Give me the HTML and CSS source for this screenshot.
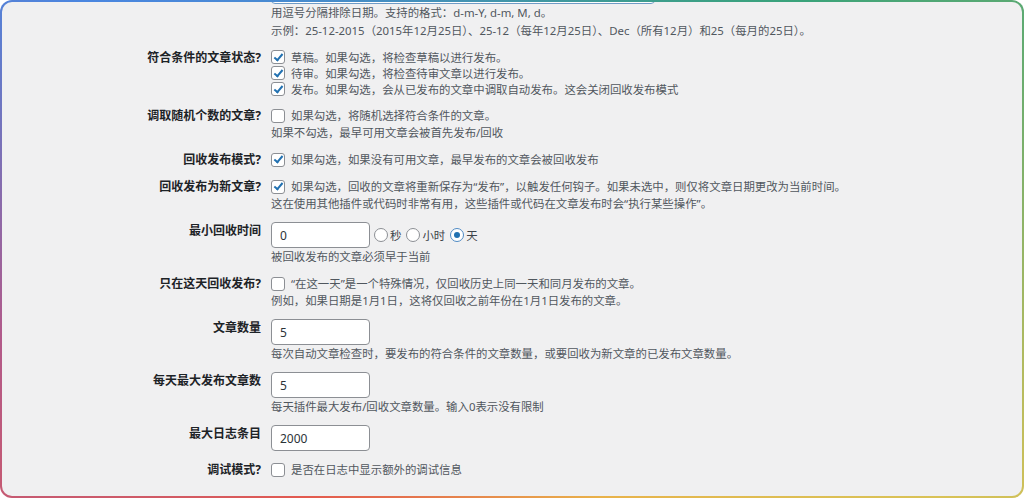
FILE: index.html
```html
<!DOCTYPE html>
<html lang="zh-CN">
<head>
  <meta charset="UTF-8" />
  <title>设置</title>
  <link rel="stylesheet" href="styles.css">
</head>
<body>
  <div class="frame">
    <div class="form">

      <!-- Excluded dates (cut off at the top) -->
      <div class="row row-first">
        <div class="row-label"></div>
        <div class="field">
          <input type="text" class="text-wide" value="" />
          <p class="desc desc-tall">用逗号分隔排除日期。支持的格式：d-m-Y, d-m, M, d。</p>
          <p class="desc desc-tall">示例：25-12-2015（2015年12月25日）、25-12（每年12月25日）、Dec（所有12月）和25（每月的25日）。</p>
        </div>
      </div>

      <div class="row">
        <div class="row-label">符合条件的文章状态?</div>
        <div class="field stack">
          <label class="opt"><input type="checkbox" checked /> 草稿。如果勾选，将检查草稿以进行发布。</label>
          <label class="opt"><input type="checkbox" checked /> 待审。如果勾选，将检查待审文章以进行发布。</label>
          <label class="opt"><input type="checkbox" checked /> 发布。如果勾选，会从已发布的文章中调取自动发布。这会关闭回收发布模式</label>
        </div>
      </div>

      <div class="row">
        <div class="row-label">调取随机个数的文章?</div>
        <div class="field">
          <label class="opt"><input type="checkbox" /> 如果勾选，将随机选择符合条件的文章。</label>
          <p class="desc">如果不勾选，最早可用文章会被首先发布/回收</p>
        </div>
      </div>

      <div class="row">
        <div class="row-label">回收发布模式?</div>
        <div class="field">
          <label class="opt"><input type="checkbox" checked /> 如果勾选，如果没有可用文章，最早发布的文章会被回收发布</label>
        </div>
      </div>

      <div class="row">
        <div class="row-label">回收发布为新文章?</div>
        <div class="field">
          <label class="opt"><input type="checkbox" checked /> 如果勾选，回收的文章将重新保存为“发布”，以触发任何钩子。如果未选中，则仅将文章日期更改为当前时间。</label>
          <p class="desc">这在使用其他插件或代码时非常有用，这些插件或代码在文章发布时会“执行某些操作”。</p>
        </div>
      </div>

      <div class="row">
        <div class="row-label">最小回收时间</div>
        <div class="field">
          <div class="inline">
            <input type="text" class="text-small" value="0" />
            <label class="radio"><input type="radio" name="unit" /> 秒</label>
            <label class="radio"><input type="radio" name="unit" /> 小时</label>
            <label class="radio"><input type="radio" name="unit" checked /> 天</label>
          </div>
          <p class="desc">被回收发布的文章必须早于当前</p>
        </div>
      </div>

      <div class="row">
        <div class="row-label">只在这天回收发布?</div>
        <div class="field">
          <label class="opt"><input type="checkbox" /> “在这一天”是一个特殊情况，仅回收历史上同一天和同月发布的文章。</label>
          <p class="desc">例如，如果日期是1月1日，这将仅回收之前年份在1月1日发布的文章。</p>
        </div>
      </div>

      <div class="row">
        <div class="row-label">文章数量</div>
        <div class="field">
          <input type="text" class="text-small" value="5" />
          <p class="desc">每次自动文章检查时，要发布的符合条件的文章数量，或要回收为新文章的已发布文章数量。</p>
        </div>
      </div>

      <div class="row">
        <div class="row-label">每天最大发布文章数</div>
        <div class="field">
          <input type="text" class="text-small" value="5" />
          <p class="desc">每天插件最大发布/回收文章数量。输入0表示没有限制</p>
        </div>
      </div>

      <div class="row">
        <div class="row-label">最大日志条目</div>
        <div class="field">
          <input type="text" class="text-small" value="2000" />
        </div>
      </div>

      <div class="row">
        <div class="row-label">调试模式?</div>
        <div class="field">
          <label class="opt"><input type="checkbox" /> 是否在日志中显示额外的调试信息</label>
        </div>
      </div>

    </div>
  </div>
</body>
</html>
```

FILE: styles.css
```css
body {
  margin: 0;
  background: #fff;
  font-family: "Noto Sans", "Noto Sans CJK SC", sans-serif;
  font-size: 12px;
}

.frame {
  box-sizing: border-box;
  height: 498px;
  border: 2px solid transparent;
  border-radius: 12px;
  background:
    linear-gradient(#f0f0f1, #f0f0f1) padding-box,
    conic-gradient(from -60deg, #4a86e0 0deg, #3aa37a 110deg, #d9c257 180deg, #e9b24a 220deg, #e35a4f 280deg, #b25a8a 320deg, #4a86e0 360deg) border-box;
  overflow: hidden;
}

.form {
  display: flex;
  flex-direction: column;
  gap: 10px;
}

.row {
  display: grid;
  grid-template-columns: 259px 1fr;
  column-gap: 10px;
}

.row-first {
  margin-top: -24px;
  margin-bottom: -1px;
}

.row-label {
  text-align: right;
  font-weight: 700;
  color: #1d2327;
  line-height: 17px;
}

.field {
  color: #50575e;
  font-size: 11.4px;
  line-height: 17px;
}

.desc {
  margin: 0;
}

.desc-tall {
  line-height: 18px;
}

.opt {
  display: flex;
  align-items: center;
  gap: 6px;
  height: 17px;
  white-space: nowrap;
}

.stack .opt {
  height: 16px;
}

input[type="checkbox"],
input[type="radio"] {
  appearance: none;
  box-sizing: border-box;
  width: 14px;
  height: 14px;
  margin: 0;
  border: 1px solid #8c8f94;
  background: #fff;
  position: relative;
  flex: none;
}

input[type="checkbox"] {
  border-radius: 3px;
}

input[type="checkbox"]:checked::before {
  content: "";
  position: absolute;
  left: 3.5px;
  top: 0.5px;
  width: 3px;
  height: 7px;
  border-right: 2px solid #2271b1;
  border-bottom: 2px solid #2271b1;
  transform: rotate(40deg);
}

input[type="radio"] {
  border-radius: 50%;
}

input[type="radio"]:checked {
  border-color: #4f8ac4;
}

input[type="radio"]:checked::before {
  content: "";
  position: absolute;
  left: 3px;
  top: 3px;
  width: 6px;
  height: 6px;
  border-radius: 50%;
  background: #2271b1;
}

input[type="text"] {
  box-sizing: border-box;
  display: block;
  height: 26px;
  margin: 0;
  padding: 0 8px;
  border: 1px solid #8c8f94;
  border-radius: 4px;
  background: #fff;
  color: #2c3338;
  font-family: inherit;
  font-size: 12px;
}

.text-small {
  width: 99px;
}

.text-wide {
  width: 384px;
  border-color: #6f9bc6 !important;
}

.inline {
  display: flex;
  align-items: center;
}

.inline .text-small {
  margin-right: 4px;
}

.radio {
  display: flex;
  align-items: center;
  gap: 2px;
  margin-right: 5px;
  color: #3c434a;
  white-space: nowrap;
}
```
